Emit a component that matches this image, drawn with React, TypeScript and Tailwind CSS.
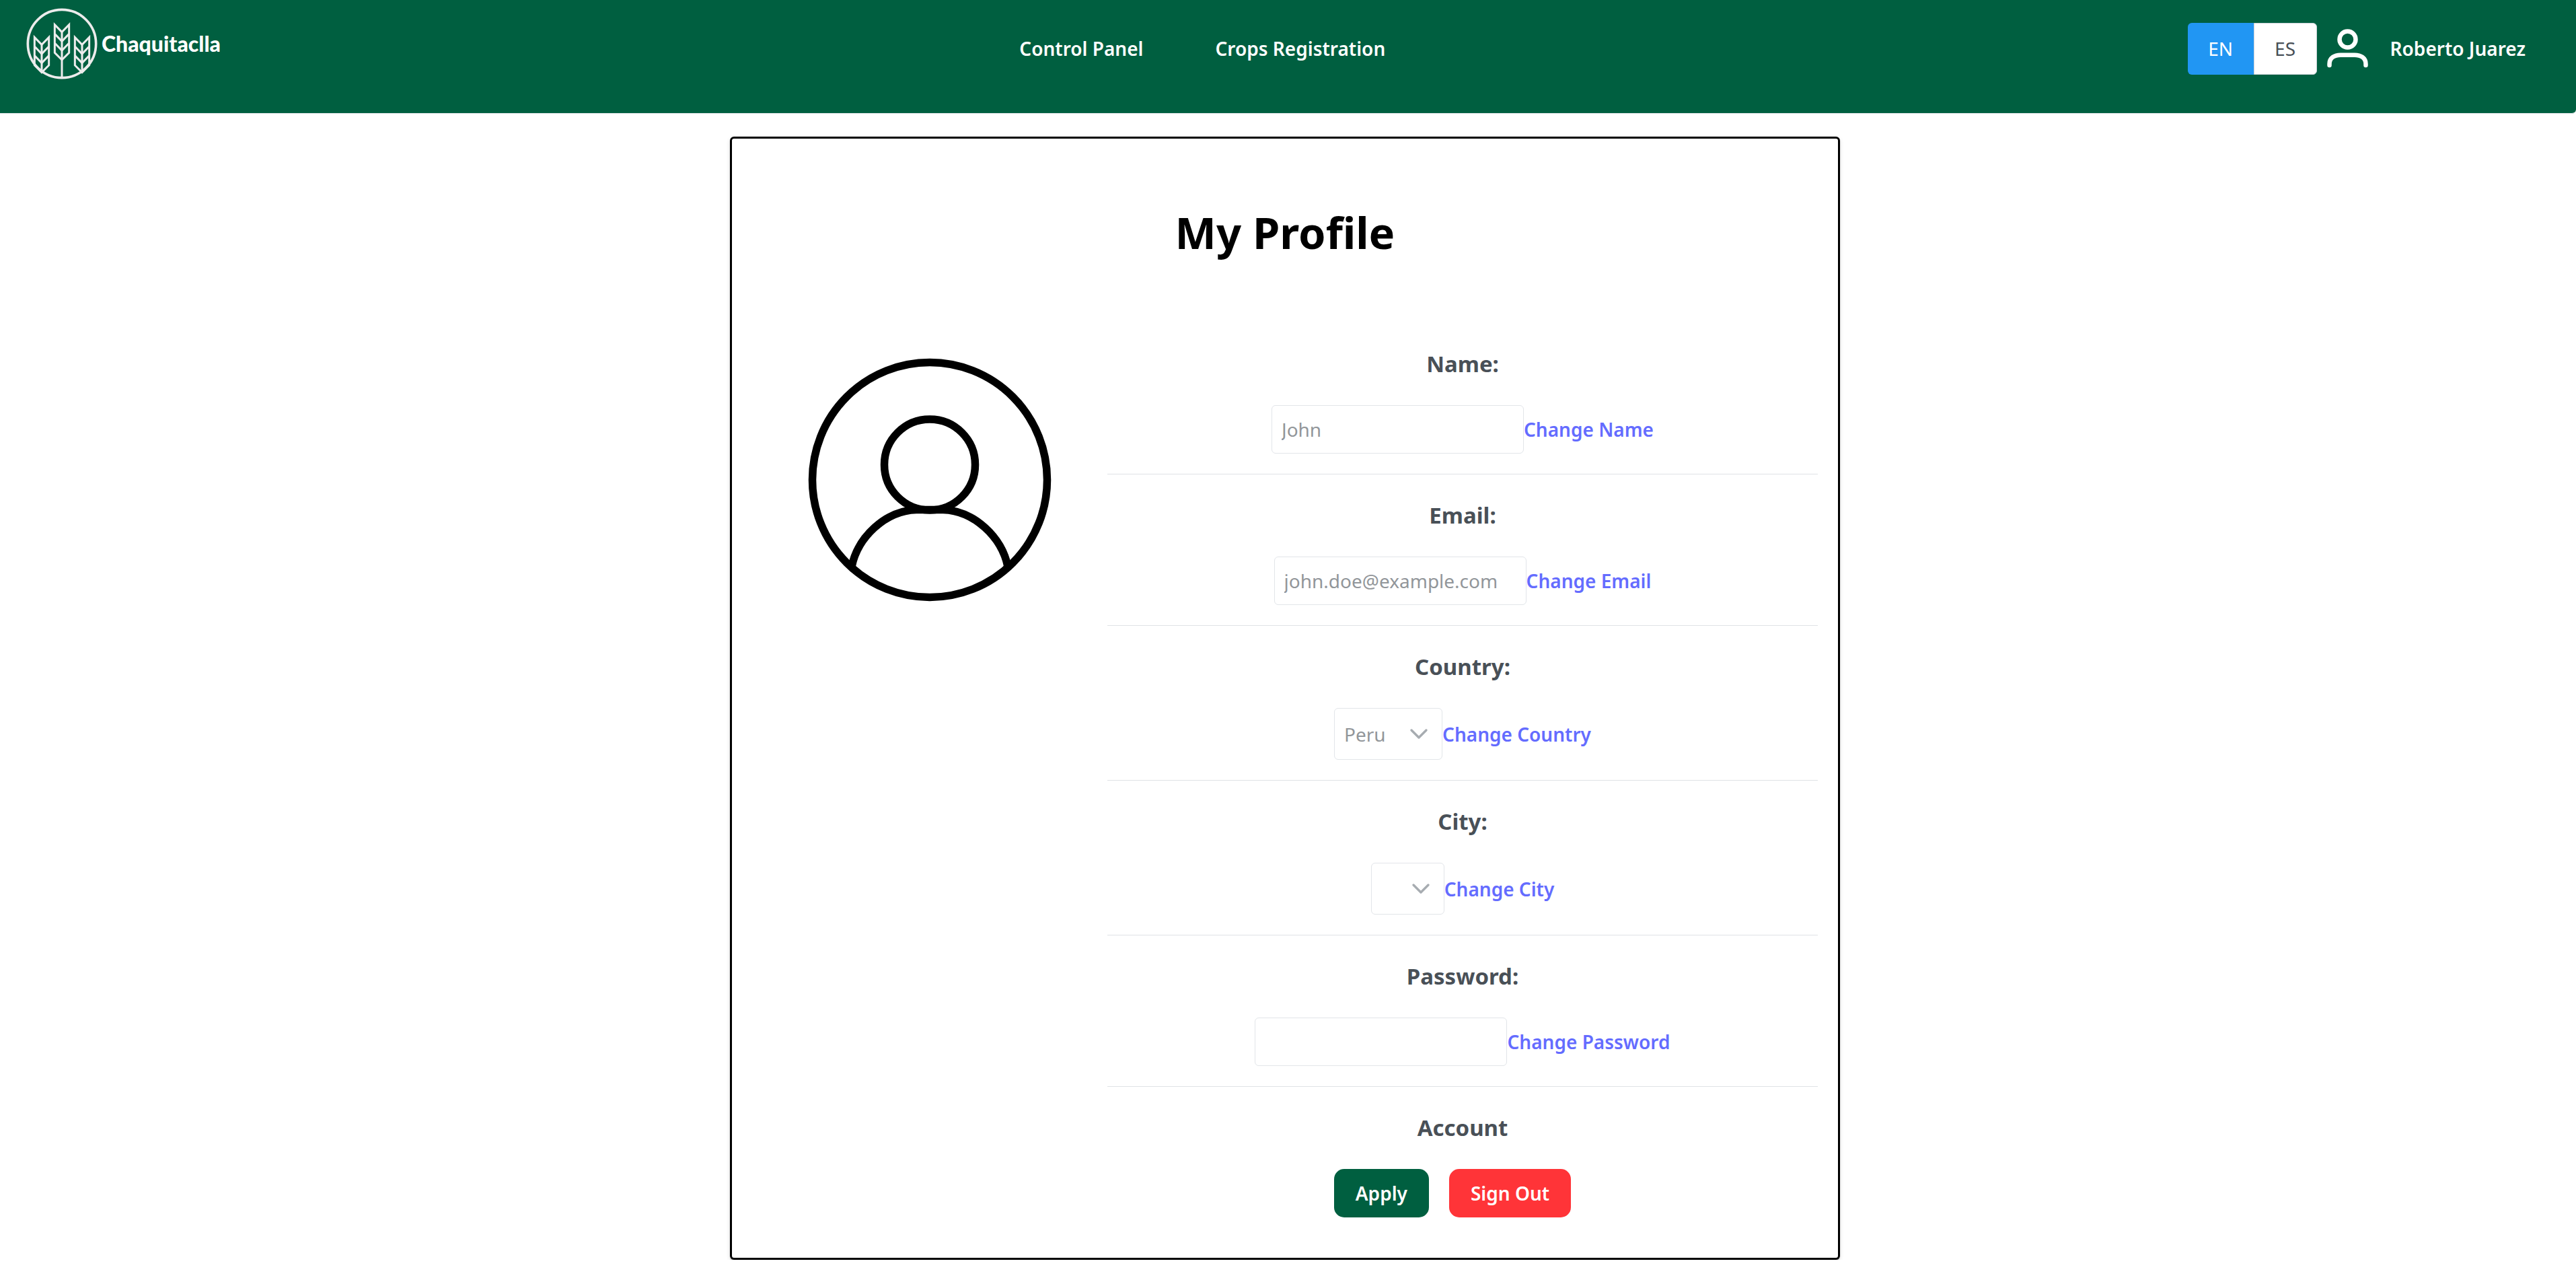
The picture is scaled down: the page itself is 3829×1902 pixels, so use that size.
import type { ReactNode } from 'react';

const GRAINS = 'M186 130 L154 97 V222 L186 254 L218 222 V97 Z M154 138 L186 171 L218 138 M154 179 L186 212 L218 179';

function LogoMark() {
  return (
    <svg aria-hidden="true" viewBox="27 23 318 318" className="size-[106px]" fill="none" stroke="#ececec">
      <circle cx="186" cy="182" r="152" strokeWidth="11" />
      <g strokeWidth="9">
        <path d={GRAINS} />
        <path d="M186 130 V332" />
        <g transform="translate(-90 56)">
          <path d={GRAINS} />
          <path d="M186 130 V250" />
        </g>
        <g transform="translate(90 56)">
          <path d={GRAINS} />
          <path d="M186 130 V250" />
        </g>
      </g>
    </svg>
  );
}

function UserIcon() {
  return (
    <svg aria-hidden="true" viewBox="0 0 62 58" className="h-[58px] w-[62px]" fill="none" stroke="white" strokeWidth="6.5" strokeLinecap="round">
      <circle cx="30.5" cy="15.5" r="12" />
      <path d="M3.5 54 V52 C3.5 43 11 38.7 20 38.7 H41 C50 38.7 57.5 43 57.5 52 V54" />
    </svg>
  );
}

function Avatar() {
  return (
    <svg role="img" aria-label="Profile picture" viewBox="0 0 404 406" className="mt-[30px] w-[404px]" fill="none" stroke="black" strokeWidth="11.5">
      <circle cx="202" cy="203" r="174.5" />
      <circle cx="202" cy="180.5" r="67.5" />
      <path d="M86 332 C95 288 136 249 182 247.5 H222 C268 249 309 288 318 332" />
    </svg>
  );
}

function Header() {
  return (
    <header className="flex h-[169px] items-center justify-between rounded-br-md border-b border-[#dee2e6] bg-[#005f40] pr-[75px] pb-[24px] pl-[39px] text-[28px] leading-[42px] font-semibold text-white">
      <a href="#" className="mb-[14px] flex items-center gap-[6px]">
        <LogoMark />
        <span className="font-['Lato',sans-serif] text-[32px] font-black">Chaquitaclla</span>
      </a>
      <nav className="flex gap-[107px] pr-[5px]">
        <a href="#control-panel">Control Panel</a>
        <a href="#crops">Crops Registration</a>
      </nav>
      <div className="flex items-center">
        <div className="flex h-[77px] font-normal" role="group" aria-label="Language">
          <button type="button" aria-pressed="true" className="w-[98px] rounded-l-md bg-[#2196f3]">EN</button>
          <button type="button" aria-pressed="false" className="w-[94px] rounded-r-md border border-[#ced4da] bg-white text-[#495057]">ES</button>
        </div>
        <a href="#profile" className="ml-[15px] flex items-center gap-[32px]">
          <UserIcon />
          <span>Roberto Juarez</span>
        </a>
      </div>
    </header>
  );
}

const LABEL = 'block text-[33px] leading-[62px] font-bold';
const INPUT = 'h-[72px] w-[375px] rounded-md border border-[#e2e5e9] bg-white px-[14px] text-[#92969a] placeholder:text-[#92969a]';

function Row({ id, label, action, children }: { id: string; label: string; action: string; children: ReactNode }) {
  return (
    <div className="border-b border-[#dfe2e6] py-[30px] text-center">
      <label htmlFor={id} className={LABEL}>{label}</label>
      <div className="mt-[30px] flex items-center justify-center">
        {children}
        <a href={`#${id}`} className="font-semibold text-[#646cff]">{action}</a>
      </div>
    </div>
  );
}

function Select({ id, width, options }: { id: string; width: string; options: string[] }) {
  return (
    <div className={`relative h-[77px] ${width}`}>
      <select id={id} className="h-full w-full appearance-none rounded-md border border-[#e2e5e9] bg-white pl-[14px] text-[#92969a]">
        {options.map((o) => <option key={o}>{o}</option>)}
      </select>
      <svg aria-hidden="true" viewBox="0 0 28 18" className="pointer-events-none absolute top-[30px] right-[21px] h-[18px] w-[28px]" fill="none" stroke="#a7acb1" strokeWidth="3.4" strokeLinecap="round" strokeLinejoin="round">
        <path d="M3 3 L14 14 L25 3" />
      </svg>
    </div>
  );
}

export default function App() {
  return (
    <div className="bg-white font-['Noto_Sans',sans-serif] text-[28px] leading-[42px] text-[#495057]">
      <Header />
      <main className="pt-[34px] pr-[9px]">
        <section className="mx-auto max-w-[1650px] rounded-md border-3 border-black bg-white px-[30px] pb-[60px] shadow-[0_4px_2px_-2px_rgba(0,0,0,0.2),0_2px_2px_rgba(0,0,0,0.14),0_2px_6px_rgba(0,0,0,0.12)]">
          <h1 className="pt-[92px] pb-[88px] text-center text-[65px] leading-[94px] font-bold text-black">My Profile</h1>
          <div className="grid grid-cols-3">
            <div className="flex items-start justify-center">
              <Avatar />
            </div>
            <form className="col-span-2" onSubmit={(e) => e.preventDefault()}>
              <Row id="name" label="Name:" action="Change Name">
                <input id="name" type="text" placeholder="John" className={INPUT} />
              </Row>
              <Row id="email" label="Email:" action="Change Email">
                <input id="email" type="email" placeholder="john.doe@example.com" className={INPUT} />
              </Row>
              <Row id="country" label="Country:" action="Change Country">
                <Select id="country" width="w-[161px]" options={['Peru']} />
              </Row>
              <Row id="city" label="City:" action="Change City">
                <Select id="city" width="w-[109px]" options={['']} />
              </Row>
              <Row id="password" label="Password:" action="Change Password">
                <input id="password" type="password" className={INPUT} />
              </Row>
              <div className="pt-[30px] text-center">
                <h2 className={LABEL}>Account</h2>
                <div className="mt-[30px] flex justify-center gap-[30px] pr-[30px] font-semibold text-white">
                  <button type="submit" className="h-[72px] rounded-[15px] bg-[#005f40] px-8">Apply</button>
                  <button type="button" className="h-[72px] rounded-[15px] bg-[#ff3438] px-8">Sign Out</button>
                </div>
              </div>
            </form>
          </div>
        </section>
      </main>
    </div>
  );
}
